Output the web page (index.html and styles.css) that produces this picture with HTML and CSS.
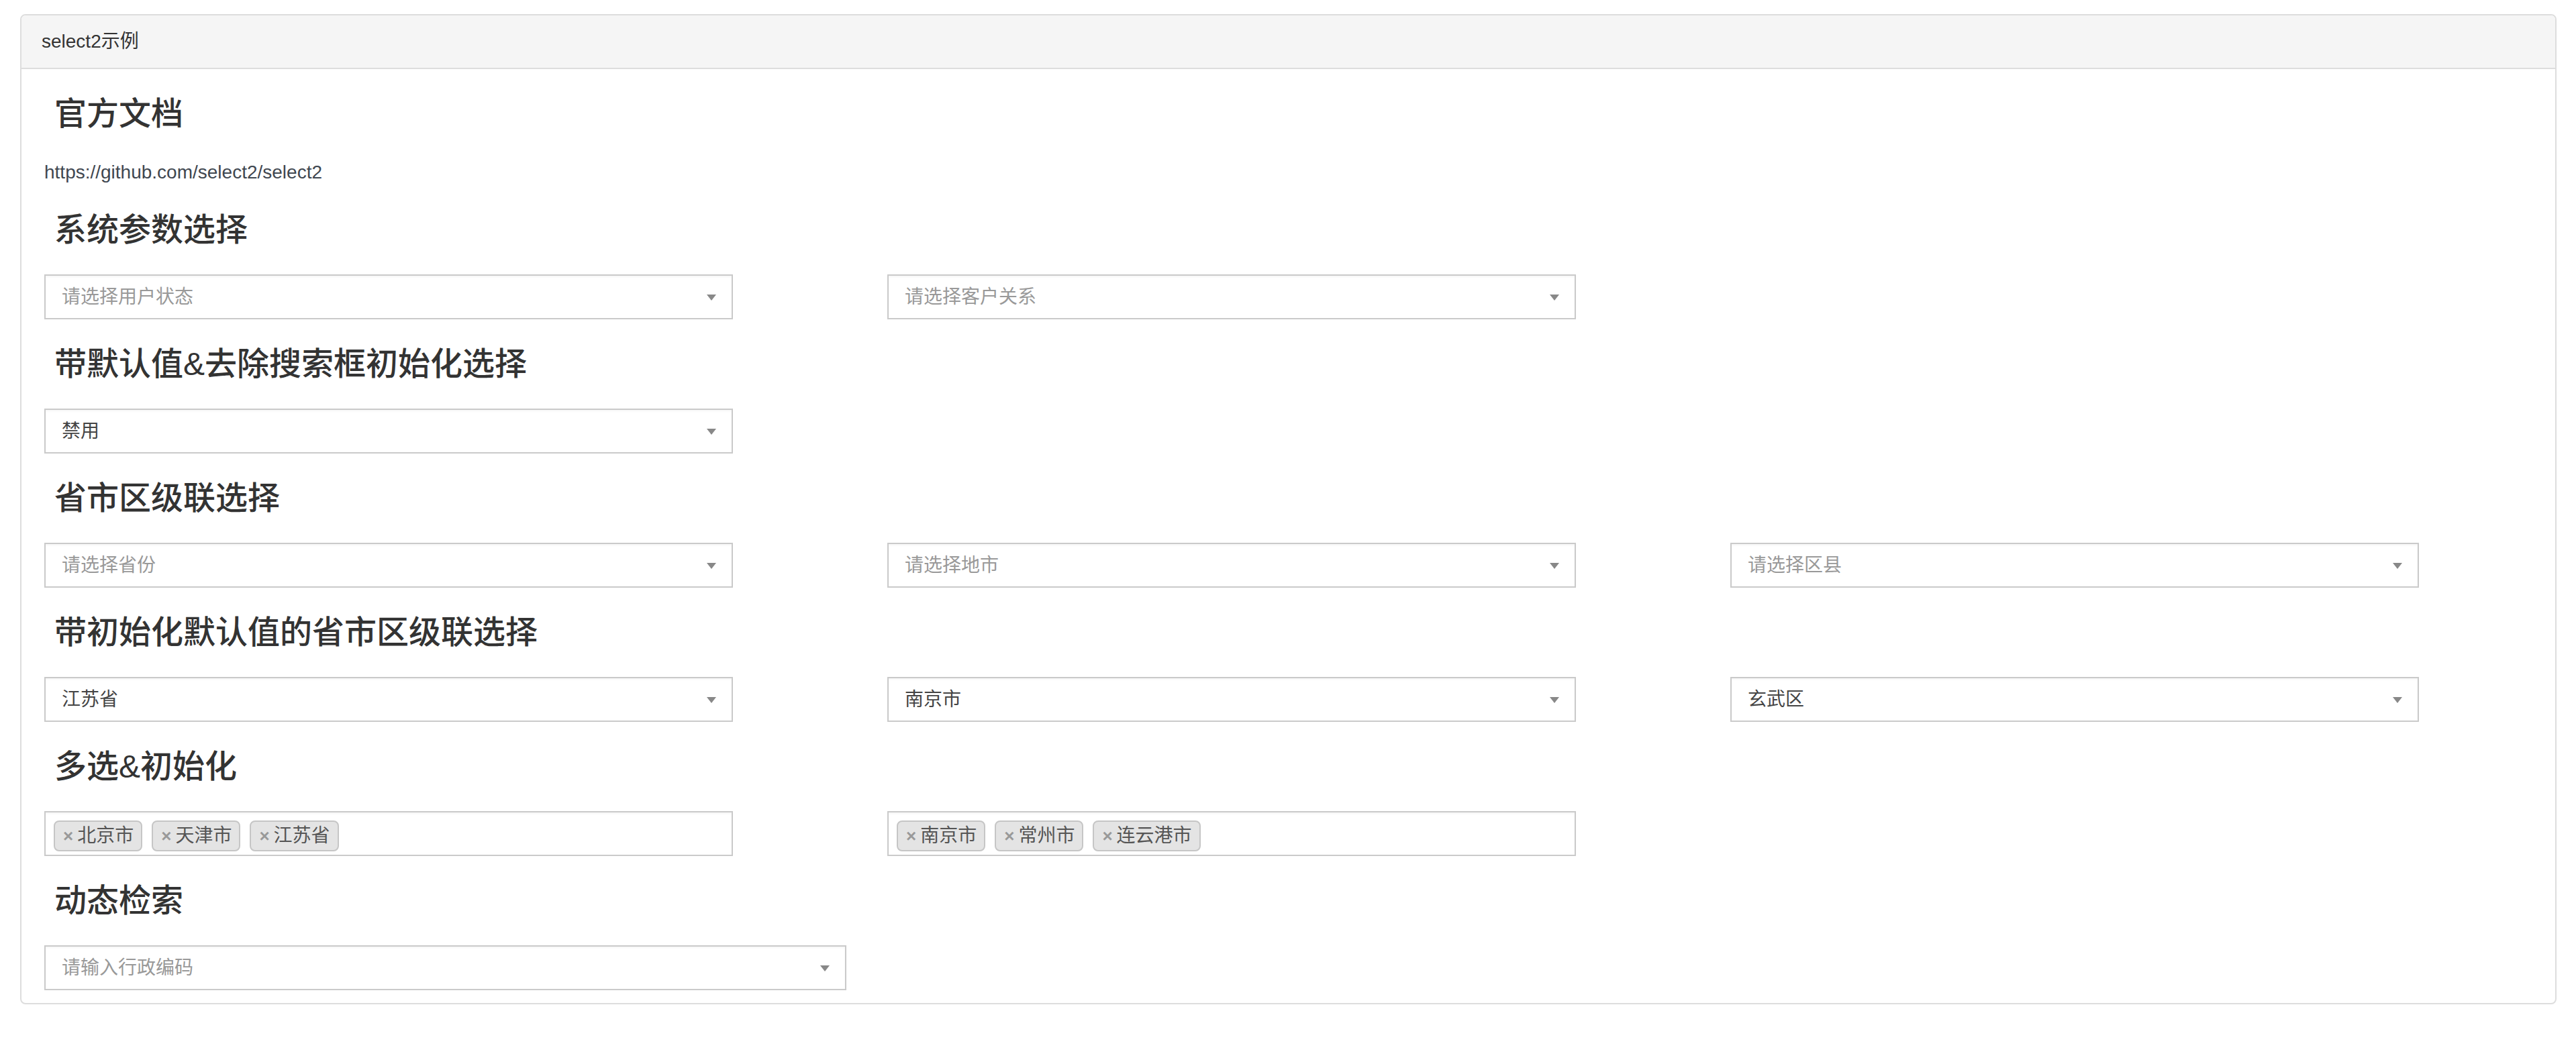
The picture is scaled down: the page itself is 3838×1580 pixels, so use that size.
FILE: index.html
```html
<!DOCTYPE html>
<html lang="zh-CN">
<head>
<meta charset="utf-8">
<title>select2示例</title>
<link rel="stylesheet" href="styles.css">
</head>
<body>
<div class="page">
  <div class="panel">
    <div class="panel-heading">select2示例</div>
    <div class="panel-body">
      <h3 class="title first">官方文档</h3>
      <p class="doc-link">https://github.com/select2/select2</p>

      <h3 class="title">系统参数选择</h3>
      <div class="row">
        <div class="select"><span class="placeholder">请选择用户状态</span><span class="arrow"></span></div>
        <div class="select"><span class="placeholder">请选择客户关系</span><span class="arrow"></span></div>
      </div>

      <h3 class="title">带默认值&amp;去除搜索框初始化选择</h3>
      <div class="row">
        <div class="select"><span class="value">禁用</span><span class="arrow"></span></div>
      </div>

      <h3 class="title">省市区级联选择</h3>
      <div class="row">
        <div class="select"><span class="placeholder">请选择省份</span><span class="arrow"></span></div>
        <div class="select"><span class="placeholder">请选择地市</span><span class="arrow"></span></div>
        <div class="select"><span class="placeholder">请选择区县</span><span class="arrow"></span></div>
      </div>

      <h3 class="title">带初始化默认值的省市区级联选择</h3>
      <div class="row">
        <div class="select"><span class="value">江苏省</span><span class="arrow"></span></div>
        <div class="select"><span class="value">南京市</span><span class="arrow"></span></div>
        <div class="select"><span class="value">玄武区</span><span class="arrow"></span></div>
      </div>

      <h3 class="title">多选&amp;初始化</h3>
      <div class="row">
        <div class="multi">
          <span class="tag"><span class="remove">×</span>北京市</span>
          <span class="tag"><span class="remove">×</span>天津市</span>
          <span class="tag"><span class="remove">×</span>江苏省</span>
        </div>
        <div class="multi">
          <span class="tag"><span class="remove">×</span>南京市</span>
          <span class="tag"><span class="remove">×</span>常州市</span>
          <span class="tag"><span class="remove">×</span>连云港市</span>
        </div>
      </div>

      <h3 class="title">动态检索</h3>
      <div class="row">
        <div class="select wide"><span class="placeholder">请输入行政编码</span><span class="arrow"></span></div>
      </div>
    </div>
  </div>
</div>
</body>
</html>
```

FILE: styles.css
```css
html, body {
  margin: 0;
  padding: 0;
  background: #ffffff;
}

body {
  font-family: "Liberation Sans", "Noto Sans CJK SC", sans-serif;
  font-size: 28px;
  line-height: 40px;
  color: #333333;
}

.page {
  padding: 21px 29px 0 30px;
}

.panel {
  border: 2px solid #dddddd;
  border-radius: 8px;
  background: #ffffff;
}

.panel-heading {
  background: #f5f5f5;
  border-bottom: 2px solid #dddddd;
  border-radius: 6px 6px 0 0;
  padding: 19px 30px;
  height: 40px;
  line-height: 40px;
  font-size: 28px;
  color: #333333;
}

.panel-body {
  display: flex;
  flex-direction: column;
  padding: 40px 34px 19px 34px;
}

.title {
  margin: 40px 0 0 15px;
  font-size: 48px;
  line-height: 53px;
  font-weight: 500;
  color: #333333;
}

.title.first {
  margin-top: 0;
}

.doc-link {
  margin: 41px 0 0 0;
  height: 40px;
  line-height: 40px;
  color: #3f4750;
}

.doc-link + .title {
  margin-top: 39px;
}

.row {
  display: flex;
  gap: 230px;
  margin-top: 40px;
}

.select {
  position: relative;
  box-sizing: border-box;
  width: 1026px;
  height: 67px;
  border: 2px solid #cacaca;
  box-shadow: inset 0 2px 3px rgba(0, 0, 0, 0.04);
  background: #ffffff;
  display: flex;
  align-items: center;
  padding-left: 24px;
  font-size: 28px;
}

.select.wide {
  width: 1195px;
}

.placeholder {
  color: #999999;
}

.value {
  color: #444444;
}

.arrow {
  position: absolute;
  right: 23px;
  top: 50%;
  margin-top: -4px;
  width: 0;
  height: 0;
  border-style: solid;
  border-width: 9px 7px 0 7px;
  border-color: #888888 transparent transparent transparent;
}

.multi {
  box-sizing: border-box;
  width: 1026px;
  height: 67px;
  border: 2px solid #cacaca;
  box-shadow: inset 0 2px 3px rgba(0, 0, 0, 0.04);
  background: #ffffff;
  display: flex;
  align-items: flex-start;
  gap: 14px;
  padding: 12px 0 0 12px;
}

.tag {
  box-sizing: border-box;
  height: 46px;
  display: inline-flex;
  align-items: center;
  padding: 0 11px 0 12px;
  background: #e4e4e4;
  border: 2px solid #c6c6c6;
  border-radius: 8px;
  color: #555555;
  font-size: 28px;
  line-height: 40px;
}

.remove {
  color: #999999;
  font-weight: bold;
  font-size: 26px;
  margin-right: 6px;
}
```
